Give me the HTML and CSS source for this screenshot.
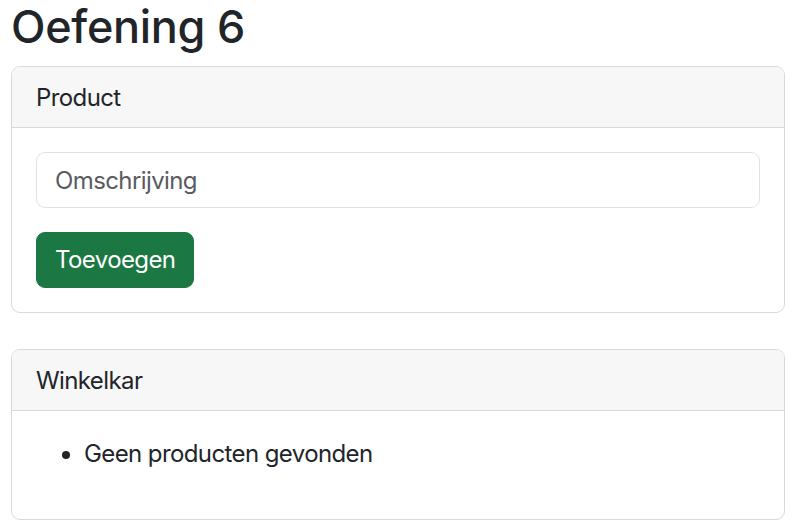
FILE: index.html
```html
<!DOCTYPE html>
<html lang="nl">
<head>
<meta charset="utf-8">
<title>Oefening 6</title>
<link rel="stylesheet" href="styles.css">
</head>
<body>
<div class="page">
  <h1 class="title">Oefening 6</h1>
  <section class="card">
    <div class="card-header">Product</div>
    <div class="card-body">
      <input class="field" type="text" placeholder="Omschrijving">
      <button class="btn" type="button">Toevoegen</button>
    </div>
  </section>
  <section class="card card-gap">
    <div class="card-header">Winkelkar</div>
    <div class="card-body">
      <ul class="list">
        <li>Geen producten gevonden</li>
      </ul>
    </div>
  </section>
</div>
</body>
</html>
```

FILE: styles.css
```css
* { box-sizing: border-box; }
html, body { margin: 0; padding: 0; background: #fff; }
body {
  font-family: Inter, "Liberation Sans", sans-serif;
  font-size: 24px;
  line-height: 36px;
  letter-spacing: -0.6px;
  color: #212529;
}
.page { padding: 0 10px 0 11px; }
.title {
  margin: 0 0 12px;
  font-size: 45px;
  line-height: 54px;
  font-weight: 500;
  letter-spacing: -0.3px;
}
.card {
  border: 1px solid #d9d9d9;
  border-radius: 9px;
  overflow: hidden;
}
.card-gap { margin-top: 36px; }
.card-header {
  background: #f7f7f7;
  border-bottom: 1px solid #d9d9d9;
  padding: 13px 24px 11px;
}
.card-body {
  padding: 24px;
  display: flex;
  flex-direction: column;
  align-items: flex-start;
}
.field {
  width: 100%;
  height: 56px;
  padding: 9px 18px;
  font: inherit;
  letter-spacing: inherit;
  border: 1px solid #dee2e6;
  border-radius: 9px;
  color: #212529;
}
.field::placeholder { color: #595c5f; }
.btn {
  margin-top: 24px;
  height: 56px;
  padding: 9px 18px;
  font: inherit;
  letter-spacing: inherit;
  color: #fff;
  background: #1b7843;
  border: 1px solid #1b7843;
  border-radius: 9px;
}
.list {
  margin: 0 0 23px;
  padding-left: 48px;
  padding-top: 1px;
  align-self: stretch;
}
```
